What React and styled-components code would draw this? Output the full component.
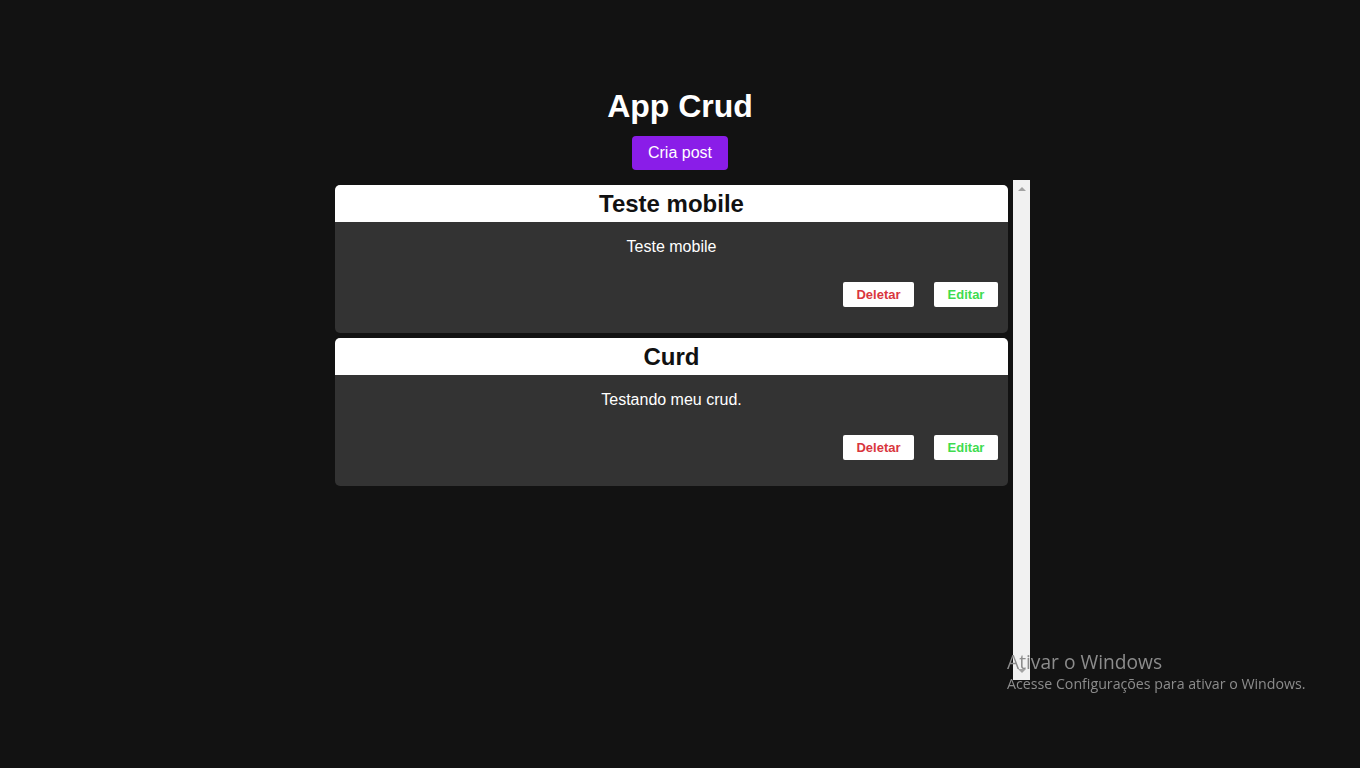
import React from "react";
import styled, { createGlobalStyle } from "styled-components";

const GlobalStyle = createGlobalStyle`
  * {
    box-sizing: border-box;
  }
  body {
    margin: 0;
    background-color: #121212;
    font-family: "Liberation Sans", Arial, sans-serif;
  }
`;

const Page = styled.div`
  min-height: 100vh;
  display: flex;
  flex-direction: column;
  align-items: center;
  padding-top: 88px;
`;

const Title = styled.h1`
  margin: 0;
  color: #ffffff;
  font-size: 32px;
  font-weight: bold;
  line-height: 37px;
`;

const CreateButton = styled.button`
  margin-top: 11px;
  background-color: #8a1de8;
  color: #ffffff;
  border: none;
  border-radius: 4px;
  padding: 0 16px;
  height: 34px;
  font-family: inherit;
  font-size: 16px;
  cursor: pointer;
`;

const ListFrame = styled.div`
  margin-top: 10px;
  width: 700px;
  height: 500px;
  display: flex;
`;

const PostList = styled.div`
  flex: 1;
  overflow-y: auto;
`;

// classic windows-style scroll track (the page has nothing to scroll)
const ScrollRail = styled.div`
  width: 17px;
  background-color: #f1f1f1;
  display: flex;
  flex-direction: column;
  justify-content: space-between;
  align-items: center;
  padding: 7px 0;
`;

const Arrow = styled.span`
  width: 0;
  height: 0;
  border-left: 4px solid transparent;
  border-right: 4px solid transparent;
  ${(p) =>
    p.$down
      ? "border-top: 4px solid #a3a3a3;"
      : "border-bottom: 4px solid #a3a3a3;"}
`;

const Card = styled.div`
  margin: 5px;
  border-radius: 5px;
  overflow: hidden;
  background-color: #333333;
`;

const CardHeader = styled.div`
  background-color: #ffffff;
  padding: 5px 10px 5px;
  text-align: center;
`;

const CardTitle = styled.h2`
  margin: 0;
  color: #111111;
  font-size: 24px;
  font-weight: bold;
  line-height: 27px;
`;

const CardBody = styled.div`
  padding: 16px 10px 26px;
  display: flex;
  flex-direction: column;
`;

const CardText = styled.p`
  margin: 0;
  color: #ffffff;
  font-size: 16px;
  line-height: 18px;
  text-align: center;
`;

const Actions = styled.div`
  margin-top: 26px;
  display: flex;
  justify-content: flex-end;
  gap: 20px;
`;

const ActionButton = styled.button`
  height: 25px;
  padding: 0 13px;
  min-width: ${(p) => p.$width}px;
  background-color: #ffffff;
  color: ${(p) => p.$color};
  border: none;
  border-radius: 2px;
  font-family: inherit;
  font-size: 13px;
  font-weight: bold;
  cursor: pointer;
`;

const Watermark = styled.div`
  position: fixed;
  left: 1007px;
  top: 649px;
  color: #8c8c8c;
  font-family: "Open Sans", "Noto Sans", sans-serif;
  pointer-events: none;
`;

const WatermarkTitle = styled.div`
  font-size: 19.2px;
  line-height: 25px;
`;

const WatermarkText = styled.div`
  font-size: 14.2px;
  line-height: 20px;
`;

const posts = [
  { id: 1, title: "Teste mobile", content: "Teste mobile" },
  { id: 2, title: "Curd", content: "Testando meu crud." },
];

function App() {
  return (
    <>
      <GlobalStyle />
      <Page>
        <Title>App Crud</Title>
        <CreateButton>Cria post</CreateButton>
        <ListFrame>
          <PostList>
            {posts.map((post) => (
              <Card key={post.id}>
                <CardHeader>
                  <CardTitle>{post.title}</CardTitle>
                </CardHeader>
                <CardBody>
                  <CardText>{post.content}</CardText>
                  <Actions>
                    <ActionButton $color="#d9363e" $width={71}>
                      Deletar
                    </ActionButton>
                    <ActionButton $color="#3fdc4f" $width={64}>
                      Editar
                    </ActionButton>
                  </Actions>
                </CardBody>
              </Card>
            ))}
          </PostList>
          <ScrollRail>
            <Arrow />
            <Arrow $down />
          </ScrollRail>
        </ListFrame>
      </Page>
      <Watermark>
        <WatermarkTitle>Ativar o Windows</WatermarkTitle>
        <WatermarkText>Acesse Configurações para ativar o Windows.</WatermarkText>
      </Watermark>
    </>
  );
}

export default App;
